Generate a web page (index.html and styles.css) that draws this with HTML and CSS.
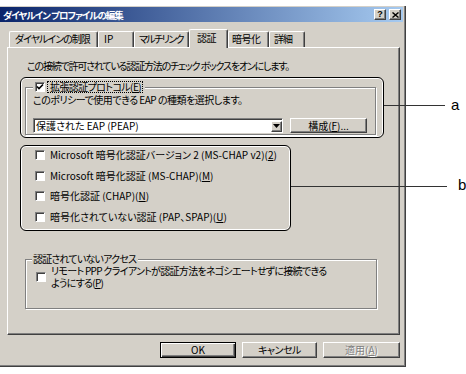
FILE: index.html
```html
<!DOCTYPE html>
<html lang="ja">
<head>
<meta charset="utf-8">
<title>ダイヤルイン プロファイルの編集</title>
<link rel="stylesheet" href="styles.css">
</head>
<body>
<div class="dialog">
  <div class="titlebar">
    <span class="title">ダイヤルイン プロファイルの編集</span>
    <span class="tbtns">
      <span class="tbtn">?</span>
      <span class="tbtn"><svg width="7" height="6" viewBox="0 0 7 6"><path d="M0.5 0.5 L6.5 5.5 M6.5 0.5 L0.5 5.5" stroke="#000" stroke-width="1.4" fill="none"/></svg></span>
    </span>
  </div>
  <div class="tabs">
    <div class="tab t1">ダイヤルインの制限</div>
    <div class="tab t2">IP</div>
    <div class="tab t3">マルチリンク</div>
    <div class="tab t4 active">認証</div>
    <div class="tab t5">暗号化</div>
    <div class="tab t6">詳細</div>
  </div>
  <div class="panel">
    <p class="intro">この接続で許可されている認証方法のチェック ボックスをオンにします。</p>
    <fieldset class="group eap">
      <legend class="legend"><span class="cb checked"><svg width="8" height="8" viewBox="0 0 8 8"><path d="M1 3.5 L3 5.5 L7 1.5" stroke="#000" stroke-width="1.6" fill="none"/></svg></span><span class="focus">拡張認証プロトコル(<u>E</u>)</span></legend>
      <p class="hint">このポリシーで使用できる EAP の種類を選択します。</p>
      <div class="eaprow">
        <div class="combo"><span class="combo-text">保護された EAP (PEAP)</span><span class="combo-btn"><svg width="7" height="4" viewBox="0 0 7 4"><path d="M0 0 H7 L3.5 4 Z" fill="#000"/></svg></span></div>
        <div class="btn cfg">構成(<u>F</u>)...</div>
      </div>
    </fieldset>
    <ul class="methods">
      <li class="method"><span class="cb"></span>Microsoft 暗号化認証バージョン 2 (MS-CHAP v2)(<u>2</u>)</li>
      <li class="method"><span class="cb"></span>Microsoft 暗号化認証 (MS-CHAP)(<u>M</u>)</li>
      <li class="method"><span class="cb"></span>暗号化認証 (CHAP)(<u>N</u>)</li>
      <li class="method"><span class="cb"></span>暗号化されていない認証 (PAP、SPAP)(<u>U</u>)</li>
    </ul>
    <fieldset class="group access">
      <legend class="legend plain">認証されていないアクセス</legend>
      <div class="method wrap"><span class="cb"></span><span class="wraptext">リモート PPP クライアントが認証方法をネゴシエートせずに接続できる<br>ようにする(<u>P</u>)</span></div>
    </fieldset>
  </div>
  <div class="buttons">
    <div class="btn default w-ok">OK</div>
    <div class="btn w-cancel">キャンセル</div>
    <div class="btn disabled w-apply">適用(<u>A</u>)</div>
  </div>
</div>

<div class="note-box note-box-a"></div>
<div class="note-line note-line-a"></div>
<div class="note-label note-label-a">a</div>
<div class="note-box note-box-b"></div>
<div class="note-line note-line-b"></div>
<div class="note-label note-label-b">b</div>
</body>
</html>
```

FILE: styles.css
```css
* { box-sizing: border-box; }
html, body { margin: 0; padding: 0; background: #fff; }
body {
  position: relative;
  width: 466px;
  height: 374px;
  overflow: hidden;
  font-family: "Noto Sans CJK JP", "Noto Sans", sans-serif;
  font-size: 10px;
  line-height: 12px;
  color: #000;
  font-feature-settings: "palt";
}
u { text-decoration: underline; text-underline-offset: 1px; }

.dialog {
  width: 406px;
  height: 361px;
  margin-top: 6px;
  padding-top: 1px;
  background: #d4d0c8;
  border-right: 1px solid #404040;
  border-bottom: 1px solid #404040;
  box-shadow: inset -1px -1px #808080;
  display: flex;
  flex-direction: column;
}

.titlebar {
  height: 15px;
  margin-right: 2px;
  padding: 0 2px 0 3px;
  display: flex;
  align-items: center;
  justify-content: space-between;
  background: linear-gradient(to right, #0a246a, #a6caf0);
  color: #fff;
}
.title {
  font-weight: bold;
  font-size: 9.5px;
  letter-spacing: -1px;
  white-space: nowrap;
}
.tbtns { display: flex; gap: 3px; }
.tbtn {
  width: 12px;
  height: 11px;
  background: #d4d0c8;
  border: 1px solid;
  border-color: #fff #404040 #404040 #fff;
  box-shadow: inset -1px -1px #808080;
  display: flex;
  align-items: center;
  justify-content: center;
  color: #000;
  font-family: "Liberation Sans", Arial, sans-serif;
  font-size: 9px;
  line-height: 9px;
  font-weight: bold;
}

.tabs {
  margin-top: 7px;
  height: 18px;
  padding-left: 9px;
  display: flex;
  align-items: flex-end;
  position: relative;
  z-index: 1;
}
.tab {
  height: 16px;
  padding-left: 5px;
  line-height: 14px;
  letter-spacing: -1px;
  white-space: nowrap;
  overflow: hidden;
  background: #d4d0c8;
  border-top: 1px solid #fff;
  border-left: 1px solid #fff;
  border-right: 1px solid #404040;
  box-shadow: inset -1px 0 #808080;
  border-radius: 2px 2px 0 0;
}
.t1 { width: 89px; }
.t2 { width: 36px; letter-spacing: 0; }
.t3 { width: 55px; padding-left: 4px; letter-spacing: -1.6px; }
.t4 { width: 39px; }
.t5 { width: 41px; padding-left: 3px; letter-spacing: -0.5px; }
.t6 { width: 36px; padding-left: 4px; }
.tab.active {
  height: 19px;
  margin-bottom: -1px;
  padding-left: 7px;
  line-height: 15px;
  letter-spacing: -0.5px;
}

.panel {
  margin-left: 7px;
  width: 393px;
  height: 288px;
  padding: 0 0 0 17px;
  border: 1px solid;
  border-color: #fff #404040 #404040 #fff;
  box-shadow: inset -1px -1px #808080;
}

.intro { margin: 12px 0 0 2px; white-space: nowrap; letter-spacing: -1.2px; }

.group {
  margin: 9px 0 0 0;
  padding: 0;
  min-width: 0;
  border: 1px solid #808080;
  box-shadow: inset 1px 1px #fff, 1px 1px #fff;
}
.group.eap { width: 351px; padding-bottom: 1px; }
.group.access { width: 352px; margin-top: 26px; padding-bottom: 19px; }

.legend {
  margin-left: 7px;
  padding: 0 2px;
  height: 12px;
  line-height: 12px;
  background: #d4d0c8;
  display: flex;
  align-items: center;
  white-space: nowrap;
}
.legend.plain { margin-left: 6px; padding: 0 2px 0 1px; letter-spacing: -0.8px; }

.cb {
  flex: none;
  width: 10px;
  height: 10px;
  margin-right: 5px;
  background: #fff;
  border: 1px solid;
  border-color: #808080 #fff #fff #808080;
  box-shadow: inset 1px 1px #404040;
  display: flex;
  align-items: center;
  justify-content: center;
}
.legend .cb { margin-right: 2px; }
.focus {
  border: 1px dotted #000;
  padding: 0 1px 0 2px;
  line-height: 10px;
  letter-spacing: -0.6px;
}

.hint { margin: 1px 0 0 7px; white-space: nowrap; letter-spacing: -0.5px; }

.eaprow {
  margin: 12px 0 0 7px;
  height: 15px;
  display: flex;
  gap: 7px;
}
.combo {
  width: 250px;
  height: 15px;
  padding-left: 2px;
  background: #fff;
  border: 1px solid;
  border-color: #808080 #fff #fff #808080;
  box-shadow: inset 1px 1px #404040;
  display: flex;
  align-items: center;
  justify-content: space-between;
}
.combo-text { padding-top: 1px; white-space: nowrap; }
.combo-btn {
  width: 11px;
  height: 11px;
  margin: 1px 0 0 0;
  background: #d4d0c8;
  border: 1px solid;
  border-color: #fff #404040 #404040 #fff;
  box-shadow: inset -1px -1px #808080;
  display: flex;
  align-items: center;
  justify-content: center;
}

.btn {
  height: 16px;
  background: #d4d0c8;
  border: 1px solid;
  border-color: #fff #404040 #404040 #fff;
  box-shadow: inset -1px -1px #808080;
  display: flex;
  align-items: center;
  justify-content: center;
  white-space: nowrap;
}
.btn.cfg { width: 77px; height: 15px; }
.btn.default {
  border: 1px solid #000;
  box-shadow: inset 1px 1px #fff, inset -1px -1px #404040, inset -2px -2px #808080;
}
.btn.disabled { color: #808080; text-shadow: 1px 1px #fff; }

.methods {
  list-style: none;
  margin: 10px 0 0 10px;
  padding: 0;
}
.method {
  height: 20.5px;
  display: flex;
  align-items: center;
  white-space: nowrap;
}
.method.wrap {
  height: auto;
  margin-left: 10px;
  line-height: 12px;
  white-space: normal;
}
.wraptext { letter-spacing: -0.7px; }

.buttons {
  margin-top: 7px;
  padding-right: 5px;
  display: flex;
  justify-content: flex-end;
  gap: 6px;
}
.w-ok { width: 76px; }
.w-cancel { width: 75px; letter-spacing: -0.5px; }
.w-apply { width: 77px; }

/* annotation overlay */
.note-box {
  position: absolute;
  border: 1px solid #000;
  border-radius: 6px;
  box-shadow: inset 0 0 0 1px #fff;
}
.note-box-a { left: 20px; top: 77px; width: 364px; height: 61px; }
.note-box-b { left: 20px; top: 145px; width: 271px; height: 86px; }
.note-line { position: absolute; height: 1px; background: #333; }
.note-line-a { left: 384px; top: 105px; width: 61px; }
.note-line-b { left: 291px; top: 186px; width: 156px; }
.note-label {
  position: absolute;
  font-family: "Liberation Sans", Arial, sans-serif;
  font-size: 15px;
  line-height: 15px;
  color: #000;
}
.note-label-a { left: 451px; top: 97px; }
.note-label-b { left: 458px; top: 177px; }
```
